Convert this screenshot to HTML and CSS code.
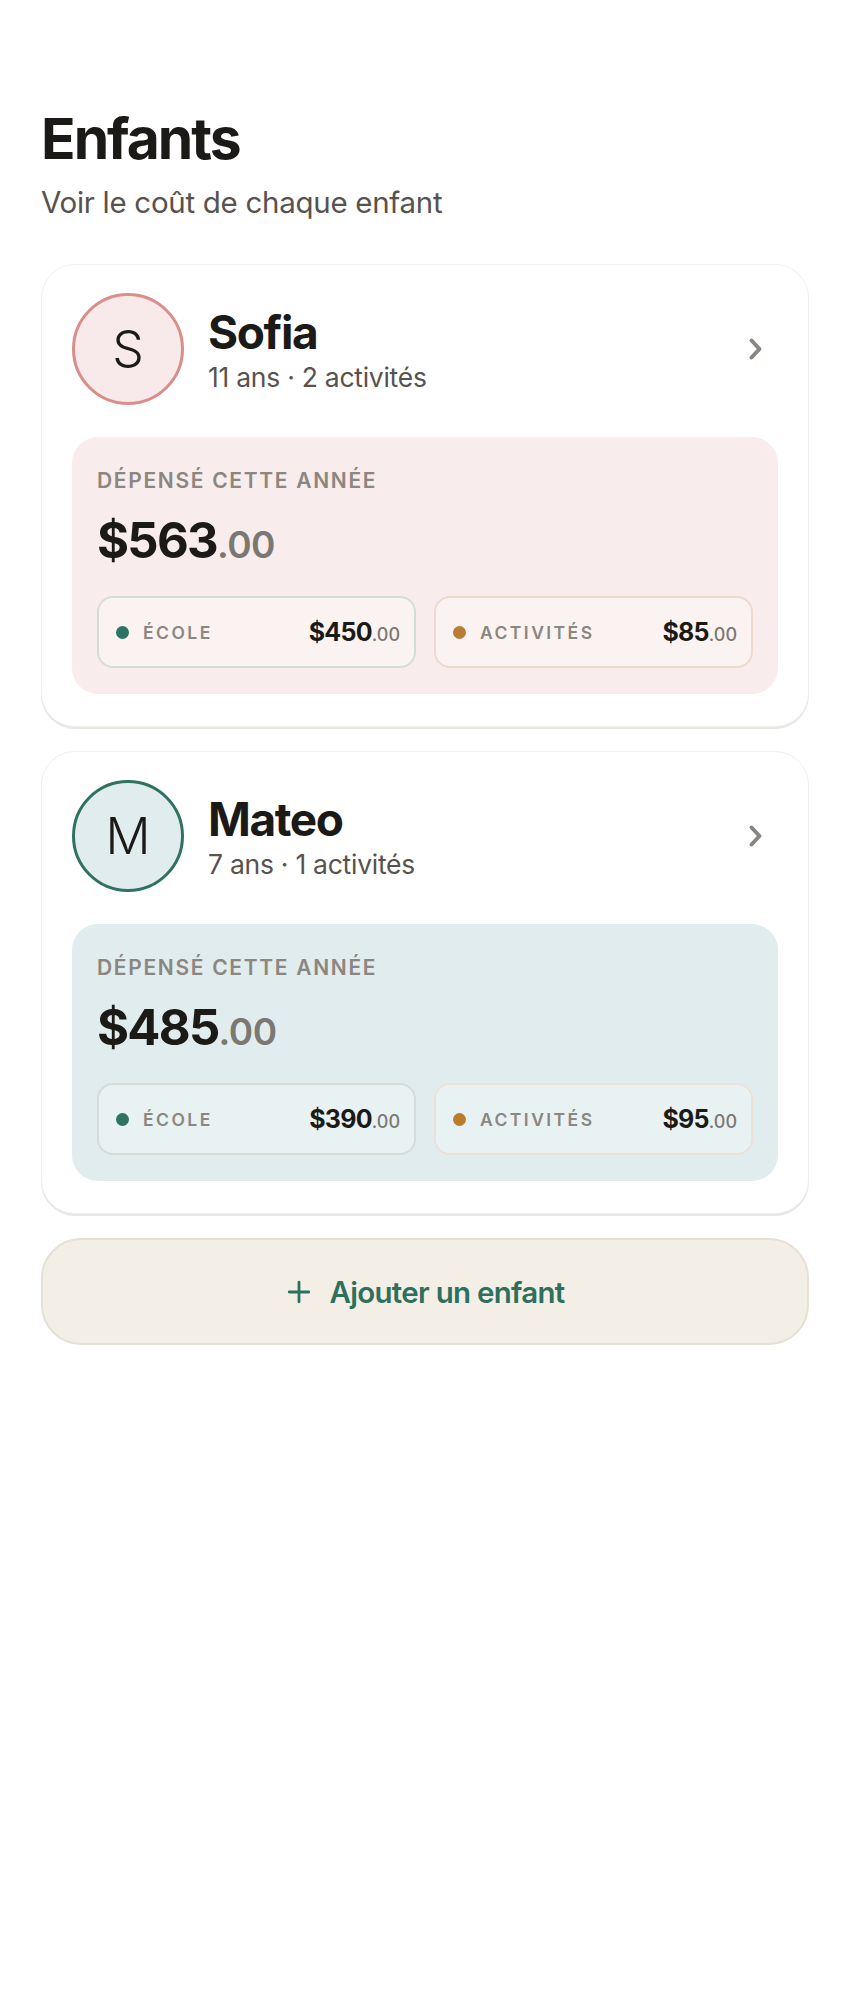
FILE: index.html
```html
<!DOCTYPE html>
<html lang="fr">
<head>
<meta charset="utf-8">
<title>Enfants</title>
<link rel="stylesheet" href="styles.css">
</head>
<body>
<main class="page">
  <h1 class="title">Enfants</h1>
  <p class="subtitle">Voir le coût de chaque enfant</p>

  <section class="list">
    <article class="card card--rose">
      <div class="card-head">
        <div class="avatar">S</div>
        <div class="info">
          <div class="name">Sofia</div>
          <div class="meta">11 ans · 2 activités</div>
        </div>
        <svg class="chevron" viewBox="0 0 16 24" width="16" height="24"><path d="M3.5 3.5L11.5 12L3.5 20.5" fill="none" stroke="currentColor" stroke-width="4" stroke-linecap="round" stroke-linejoin="round"/></svg>
      </div>
      <div class="spent">
        <div class="spent-label">DÉPENSÉ CETTE ANNÉE</div>
        <div class="spent-amount">$563<span class="cents">.00</span></div>
        <div class="split">
          <div class="chip chip--school">
            <span class="dot dot--school"></span>
            <span class="chip-label">ÉCOLE</span>
            <span class="chip-value">$450<span class="chip-cents">.00</span></span>
          </div>
          <div class="chip chip--act">
            <span class="dot dot--act"></span>
            <span class="chip-label">ACTIVITÉS</span>
            <span class="chip-value">$85<span class="chip-cents">.00</span></span>
          </div>
        </div>
      </div>
    </article>

    <article class="card card--teal">
      <div class="card-head">
        <div class="avatar">M</div>
        <div class="info">
          <div class="name">Mateo</div>
          <div class="meta">7 ans · 1 activités</div>
        </div>
        <svg class="chevron" viewBox="0 0 16 24" width="16" height="24"><path d="M3.5 3.5L11.5 12L3.5 20.5" fill="none" stroke="currentColor" stroke-width="4" stroke-linecap="round" stroke-linejoin="round"/></svg>
      </div>
      <div class="spent">
        <div class="spent-label">DÉPENSÉ CETTE ANNÉE</div>
        <div class="spent-amount">$485<span class="cents">.00</span></div>
        <div class="split">
          <div class="chip chip--school">
            <span class="dot dot--school"></span>
            <span class="chip-label">ÉCOLE</span>
            <span class="chip-value">$390<span class="chip-cents">.00</span></span>
          </div>
          <div class="chip chip--act">
            <span class="dot dot--act"></span>
            <span class="chip-label">ACTIVITÉS</span>
            <span class="chip-value">$95<span class="chip-cents">.00</span></span>
          </div>
        </div>
      </div>
    </article>

    <button class="add" type="button">
      <svg class="plus" viewBox="0 0 24 24" width="24" height="24"><path d="M12 3v18M3 12h18" fill="none" stroke="currentColor" stroke-width="2.6" stroke-linecap="round"/></svg>
      <span>Ajouter un enfant</span>
    </button>
  </section>
</main>
</body>
</html>
```

FILE: styles.css
```css
* { box-sizing: border-box; }

html, body {
  margin: 0;
  padding: 0;
  background: #ffffff;
}

body {
  font-family: "Inter", "Noto Sans", "Liberation Sans", sans-serif;
  color: #1c1a17;
}

.page {
  padding: 104px 41px 40px;
}

.title {
  margin: 0;
  font-size: 57px;
  line-height: 70px;
  font-weight: 700;
  letter-spacing: -0.035em;
  color: #1c1a17;
}

.subtitle {
  margin: 10px 0 0;
  font-size: 29.5px;
  line-height: 36px;
  font-weight: 400;
  color: #57524d;
  letter-spacing: -0.01em;
}

.list {
  margin-top: 44px;
  display: flex;
  flex-direction: column;
  gap: 24px;
}

.card {
  background: #ffffff;
  border: 1px solid #f1efec;
  border-radius: 34px;
  padding: 28px 30px 32px;
  box-shadow: 0 2px 0 #e9e7e4;
}

.card-head {
  display: flex;
  align-items: center;
  gap: 24px;
}

.avatar {
  width: 112px;
  height: 112px;
  border-radius: 50%;
  border: 3px solid;
  display: flex;
  align-items: center;
  justify-content: center;
  font-size: 50px;
  font-weight: 300;
  color: #1c1a17;
  flex: none;
}

.card--rose .avatar { border-color: #d98e8a; background: #f8eaea; }
.card--teal .avatar { border-color: #2f7262; background: #e0ecee; }

.info { flex: 1; }

.name {
  font-size: 46px;
  line-height: 54px;
  font-weight: 700;
  letter-spacing: -0.03em;
  color: #1c1a17;
}

.meta {
  margin-top: 2px;
  font-size: 26.5px;
  line-height: 32px;
  color: #57524d;
  letter-spacing: -0.01em;
}

.chevron {
  color: #8a8580;
  margin-right: 14px;
  width: 16px;
  height: 24px;
  flex: none;
}

.spent {
  margin-top: 32px;
  border-radius: 26px;
  padding: 31px 25px 26px;
}

.card--rose .spent { background: #f8ecec; }
.card--teal .spent { background: #e1ecee; }

.spent-label {
  font-size: 21px;
  line-height: 26px;
  font-weight: 600;
  letter-spacing: 0.08em;
  color: #8b8680;
}

.spent-amount {
  margin-top: 18px;
  font-size: 49px;
  line-height: 58px;
  font-weight: 700;
  letter-spacing: -0.035em;
  color: #1c1a17;
}

.cents {
  font-size: 37px;
  font-weight: 600;
  color: #7b7873;
  letter-spacing: -0.015em;
}

.split {
  margin-top: 22px;
  display: grid;
  grid-template-columns: 1fr 1fr;
  gap: 18px;
}

.chip {
  height: 72px;
  border-radius: 16px;
  border: 2px solid;
  padding: 0 14px 0 17px;
  display: flex;
  align-items: center;
  gap: 14px;
}

.card--rose .chip { background: #fbf3f2; }
.card--teal .chip { background: #e9f2f3; }

.card--rose .chip--school { border-color: #d3dcd6; }
.card--rose .chip--act { border-color: #efd9cd; }
.card--teal .chip--school { border-color: #d3dcda; }
.card--teal .chip--act { border-color: #ebe1da; }

.dot {
  width: 13px;
  height: 13px;
  border-radius: 50%;
  flex: none;
}

.dot--school { background: #2e7462; }
.dot--act { background: #b87c35; }

.chip-label {
  font-size: 17.5px;
  font-weight: 600;
  letter-spacing: 0.14em;
  color: #8b8680;
}

.chip-value {
  margin-left: auto;
  font-size: 25px;
  font-weight: 700;
  letter-spacing: -0.03em;
  color: #1c1a17;
}

.chip-cents {
  font-size: 18px;
  font-weight: 500;
  color: #7b7873;
  letter-spacing: 0;
}

.add {
  height: 107px;
  border-radius: 40px;
  background: #f3efe7;
  border: 2px solid #e6e0d5;
  display: flex;
  align-items: center;
  justify-content: center;
  gap: 18px;
  font-family: inherit;
  font-size: 29.5px;
  font-weight: 600;
  letter-spacing: -0.025em;
  color: #2f6f5e;
  cursor: pointer;
}

.plus {
  width: 26px;
  height: 26px;
}
```
